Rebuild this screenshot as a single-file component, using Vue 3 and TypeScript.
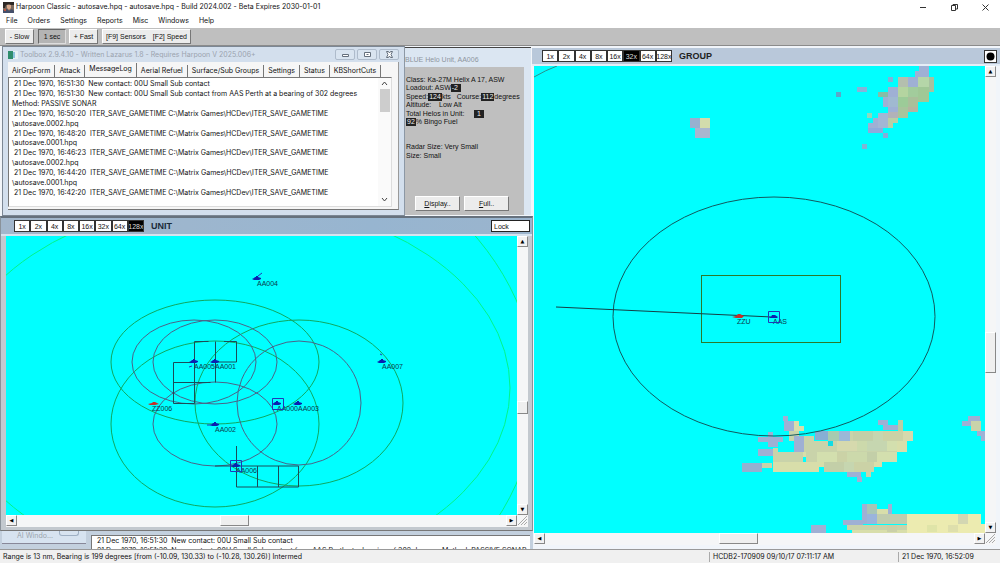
<script setup lang="ts">
import { ref } from 'vue'

type Rect = [number, number, number, number, string]

const menus = ['File', 'Orders', 'Settings', 'Reports', 'Misc', 'Windows', 'Help']
const tabs = ['AirGrpForm', 'Attack', 'MessageLog', 'Aerial Refuel', 'Surface/Sub Groups', 'Settings', 'Status', 'KBShortCuts']
const activeTab = ref('MessageLog')
const zooms = ['1x', '2x', '4x', '8x', '16x', '32x', '64x', '128x']
const unitZoom = ref('128x')
const groupZoom = ref('32x')
const lock = ref('Lock')

const save = 'ITER_SAVE_GAMETIME C:\\Matrix Games\\HCDev\\ITER_SAVE_GAMETIME'
const log = [
  ' 21 Dec 1970, 16:51:30  New contact: 00U Small Sub contact',
  ' 21 Dec 1970, 16:51:30  New contact: 00U Small Sub contact from AAS Perth at a bearing of 302 degrees',
  'Method: PASSIVE SONAR',
  ' 21 Dec 1970, 16:50:20  ' + save,
  '\\autosave.0002.hpq',
  ' 21 Dec 1970, 16:48:20  ' + save,
  '\\autosave.0001.hpq',
  ' 21 Dec 1970, 16:46:23  ' + save,
  '\\autosave.0002.hpq',
  ' 21 Dec 1970, 16:44:20  ' + save,
  '\\autosave.0001.hpq',
  ' 21 Dec 1970, 16:42:20  ' + save,
]

const greenRings = [[209, 126, 104, 62], [209, 188, 104, 83], [293, 167, 104, 83]]
const sonarRings = [[188, 126, 62, 42], [209, 126, 62, 42], [209, 188, 62, 42], [293, 167, 62, 62]]
const units = [
  { x: 251, y: 43, name: 'AA004' },
  { x: 188, y: 126, name: 'AA005' },
  { x: 209, y: 126, name: 'AA001' },
  { x: 376, y: 126, name: 'AA007' },
  { x: 271, y: 168, name: 'AA000' },
  { x: 292, y: 168, name: 'AA003' },
  { x: 209, y: 189, name: 'AA002' },
  { x: 230, y: 230, name: 'AA006' },
]

const v = '#9fb0d4'
const g = '#b7cfa6'
const s = '#c9d3aa'
const y = '#d8deaa'
const p = '#ecebb0'
const land: Rect[] = [
  [156, 52, 10, 10, '#97b0d0'], [166, 52, 10, 10, '#d2dcac'], [161, 62, 15, 10, '#a8b6cf'],
  [385, 0, 10, 11, v], [381, 5, 5, 6, v], [354, 11, 5, 5, '#7fb4d8'], [323, 21, 10, 5, '#86b4d8'], [302, 26, 5, 5, '#5ca6c8'],
  [364, 11, 10, 10, '#b4bfae'], [374, 11, 10, 10, v], [384, 11, 11, 10, '#b5d6a8'], [395, 11, 5, 15, '#a6c2a0'],
  [344, 26, 10, 5, '#86bda6'], [354, 21, 10, 10, v], [364, 21, 10, 10, '#b4d4a0'], [374, 21, 10, 10, '#a2cc9c'], [384, 21, 11, 15, '#a0c896'],
  [349, 31, 5, 10, v], [354, 31, 10, 10, '#a0b9d0'], [364, 31, 10, 10, '#9ccb98'], [374, 31, 10, 10, '#aabf9a'],
  [354, 41, 10, 5, v], [354, 46, 10, 6, '#b2b2b8'], [364, 41, 10, 11, '#a8c49c'], [374, 41, 10, 5, '#b4b4a0'],
  [333, 47, 5, 5, '#8fd8bc'], [344, 47, 10, 10, '#a3b6d4'], [354, 52, 10, 5, g], [354, 57, 5, 5, g],
  [339, 52, 5, 5, v], [334, 57, 10, 5, v], [334, 62, 15, 5, '#90aadb'], [344, 57, 10, 5, '#a3b6d4'], [349, 67, 5, 5, '#88acd8'], [328, 78, 5, 5, '#80b4d4'],
  [249, 350, 5, 5, v], [250, 355, 10, 10, v], [260, 355, 5, 10, y], [265, 360, 5, 5, y], [255, 365, 10, 10, s],
  [234, 366, 5, 5, v], [224, 371, 25, 5, v], [234, 376, 10, 5, v], [224, 383, 15, 7, v], [239, 382, 5, 8, s],
  [260, 370, 10, 16, v], [270, 370, 10, 16, s], [280, 376, 10, 10, y],
  [239, 386, 30, 10, s], [269, 386, 11, 5, y], [208, 397, 20, 9, '#95b0d0'], [228, 397, 10, 5, s], [239, 396, 46, 10, y],
  [281, 365, 13, 9, '#87afd4'], [294, 365, 11, 10, '#a6cbb0'], [305, 365, 11, 10, '#9ab8d8'], [316, 365, 63, 10, s],
  [280, 375, 93, 11, s], [272, 386, 91, 10, s], [285, 396, 63, 5, y], [290, 401, 50, 5, y],
  [363, 375, 10, 11, y], [313, 406, 14, 5, v], [323, 411, 5, 5, v], [332, 406, 5, 5, s],
  [344, 354, 10, 5, v], [349, 359, 15, 5, v], [364, 354, 5, 11, g],
  [434, 350, 12, 5, v], [428, 355, 9, 5, v], [437, 355, 10, 10, s], [443, 365, 8, 5, v], [447, 370, 4, 5, v],
  [328, 438, 5, 20, v], [333, 438, 10, 10, '#a8c5b6'], [343, 443, 15, 5, y], [354, 438, 4, 10, v],
  [333, 448, 10, 10, '#9ab4dc'], [343, 448, 30, 10, '#c0ccae'], [373, 448, 74, 10, p], [309, 454, 20, 5, v],
  [313, 459, 60, 5, s], [318, 464, 55, 6, y], [373, 458, 78, 12, p], [277, 459, 15, 11, v],
]
const shades = ['#c3cfa8', '#ccd9ab', '#d6d9ad', '#cbd2a6', '#d3dfae', '#c6d6b0']
// One strip per row of terrain: left, top, number of 10px cells
const strips = [[319, 365, 6], [303, 375, 6], [283, 386, 8], [290, 396, 5]]
for (const [i, [sx, sy, n]] of strips.entries()) {
  for (let c = 0; c < n; c++) land.push([sx + c * 10, sy, 10, 10, shades[(c * 5 + i * 2 + ((c * c) % 3)) % shades.length]])
}
land.push([294, 375, 5, 5, '#10dce4'], [424, 448, 10, 10, '#d3d6b2'], [353, 459, 10, 7, '#cad0a8'], [393, 459, 10, 7, '#dfe4a8'], [414, 459, 10, 7, '#dedfac'])
</script>

<template>
  <div class="app">
    <header class="titlebar">
      <svg class="logo" width="11" height="11" viewBox="0 0 11 11">
        <rect width="11" height="11" fill="#7d6a5c" />
        <path d="M0 0h11v3H8L6 2 3 3 2 6H0z" fill="#2d2825" />
        <path d="M4 3h4v3L6 8 4 6z" fill="#d9a98c" />
        <path d="M0 8l4-1 2 2 3-2 2 2v2H0z" fill="#45506b" />
        <path d="M1 7h2v2H1z" fill="#b9543e" />
      </svg>
      <span class="grow">Harpoon Classic - autosave.hpq - autosave.hpq - Build 2024.002 - Beta Expires 2030-01-01</span>
      <button class="sys" aria-label="Minimize"><svg width="9" height="9"><path d="M1 4.500h6" /></svg></button>
      <button class="sys" aria-label="Restore"><svg width="9" height="9"><path d="M1.500 2.500h4v5h-4zM3 2V1.500h4.500V6H6" /></svg></button>
      <button class="sys" aria-label="Close"><svg width="9" height="9"><path d="M1.500 1.500l6 6M7.500 1.500l-6 6" /></svg></button>
    </header>
    <nav class="menu">
      <button v-for="m in menus" :key="m">{{ m }}</button>
    </nav>
    <div class="toolbar">
      <button class="slow">- Slow</button>
      <button class="pressed">1 sec</button>
      <button class="fast">+ Fast</button>
      <div class="pair"><button>[F9] Sensors</button><button>[F2] Speed</button></div>
    </div>

    <main class="desk">
      <div class="left">
        <div class="upper">
          <section class="toolbox">
            <div class="tb-title">
              <svg width="10" height="8"><rect width="10" height="8" fill="#e8f1f4" /><rect width="5" height="8" fill="#2f8d6c" /><rect x="5" y="1" width="2" height="6" fill="#8cc3dc" /></svg>
              <span class="grow">Toolbox 2.9.4.10 - Written Lazarus 1.8 - Requires Harpoon V 2025.006+</span>
              <button aria-label="Minimize toolbox"><svg width="9" height="7"><path d="M1.500 3.500h6v2h-6z" /></svg></button>
              <button aria-label="Maximize toolbox"><svg width="9" height="7"><path d="M1.500 1.500h6v4h-6zM3.500 3.500h2" /></svg></button>
              <button aria-label="Close toolbox"><svg width="9" height="7"><path d="M1.500 .5h2l1 1.500 1-1.500h2L6 3.500l1.500 3h-2l-1-1.500-1 1.500h-2l1.500-3z" /></svg></button>
            </div>
            <div class="tb-body">
              <div class="tabs" role="tablist">
                <button v-for="t in tabs" :key="t" role="tab" :aria-selected="t === activeTab" :class="{ on: t === activeTab }" @click="activeTab = t">{{ t }}</button>
              </div>
              <div class="logbox">
                <ul class="log"><li v-for="(l, i) in log" :key="i">{{ l }}</li></ul>
                <div class="thin">
                  <svg width="7" height="5"><path d="M1 4l2.500-3L6 4" /></svg>
                  <i></i>
                  <svg width="7" height="5"><path d="M1 1l2.500 3L6 1" /></svg>
                </div>
              </div>
            </div>
          </section>

          <section class="helo">
            <h2>BLUE Helo Unit, AA006</h2>
            <div class="helo-body">
              <div class="facts">
                <p>Class: Ka-27M Helix A 17, ASW</p>
                <p>Loadout: ASW<b>-2&nbsp;</b></p>
                <p>Speed:<b>124</b>kts &nbsp; Course:<b>112</b>degrees</p>
                <p>Altitude: &nbsp; &nbsp;Low Alt</p>
                <p>Total Helos in Unit: &nbsp; &nbsp; <b>&nbsp;1&nbsp;</b></p>
                <p><b>92</b>% Bingo Fuel</p>
                <p></p>
                <p></p>
                <p>Radar Size: Very Small</p>
                <p>Size: Small</p>
              </div>
              <div class="acts">
                <button><u>D</u>isplay..</button>
                <button><u>F</u>ull..</button>
              </div>
            </div>
          </section>
        </div>

        <section class="unit">
          <div class="bar">
            <div class="zooms">
              <button v-for="z in zooms" :key="z" :class="{ on: z === unitZoom }" @click="unitZoom = z">{{ z }}</button>
            </div>
            <h2 class="grow">UNIT</h2>
            <input v-model="lock" aria-label="Lock" />
          </div>
          <div class="view">
            <svg class="map">
              <g fill="none" stroke="#00f58a">
                <ellipse cx="186" cy="156" rx="344" ry="275" />
                <ellipse cx="224" cy="152" rx="280" ry="188" />
              </g>
              <g fill="none" stroke="#0fa860">
                <ellipse v-for="(r, i) in greenRings" :key="i" :cx="r[0]" :cy="r[1]" :rx="r[2]" :ry="r[3]" />
              </g>
              <g fill="none" stroke="#4a6488">
                <ellipse v-for="(r, i) in sonarRings" :key="i" :cx="r[0]" :cy="r[1]" :rx="r[2]" :ry="r[3]" />
              </g>
              <path class="legs" d="M188.500 105.500v62M188.500 105.500h14M218 105.500h12.500M209.500 105.500v41M230.500 105.500v20.500H209M188.500 126.500h-21v41h21M167.500 146.500h37M230.500 210v41h62v-21H209M251.500 230v21M272.500 230v21" />
              <g v-for="u in units" :key="u.name">
                <path d="M-5 0l2-1 1-1h1v-1h2v1l3 1v1l-2 1h-5l-2-1z" class="own" :transform="`translate(${u.x} ${u.y})`" />
                <text :x="u.x" :y="u.y + 7">{{ u.name }}</text>
              </g>
              <path d="M252 40l4-3M183 131l3-1M374 118l2 1M201 189h4" class="trail" />
              <path d="M142 168l4-1 1-1h2l4 2-4 1h-5z" class="foe" />
              <text x="146" y="175">ZZ006</text>
              <path d="M266.500 162.500h11v11h-11zM224.500 224.500h11v11h-11z" class="pick" />
            </svg>
            <div class="vs v-unit"><button aria-label="Scroll up">▲</button><i></i><button aria-label="Scroll down">▼</button></div>
            <div class="hs h-unit"><button aria-label="Scroll left">◀</button><i></i><button aria-label="Scroll right">▶</button></div>
            <svg class="grip" width="10" height="10"><path d="M1 10l9-9M4 10l6-6M7 10l3-3" /></svg>
          </div>
        </section>

        <div class="behind">
          <div class="ai"><span>AI Windo...</span><em></em></div>
          <div class="backlog">
            <p>21 Dec 1970, 16:51:30&nbsp; New contact: 00U Small Sub contact</p>
            <p>21 Dec 1970, 16:51:30&nbsp; New contact: 00U Small Sub contact from AAS Perth at a bearing of 302 degrees Method: PASSIVE SONAR</p>
          </div>
        </div>
      </div>

      <section class="group">
        <div class="bar">
          <div class="zooms">
            <button v-for="z in zooms" :key="z" :class="{ on: z === groupZoom }" @click="groupZoom = z">{{ z }}</button>
          </div>
          <h2 class="grow">GROUP</h2>
          <button class="dot" aria-label="Center"><svg width="9" height="9"><circle cx="4.500" cy="4.500" r="4" /></svg></button>
        </div>
        <div class="view">
          <svg class="map">
            <g shape-rendering="crispEdges">
              <rect v-for="(r, i) in land" :key="i" :x="r[0]" :y="r[1]" :width="r[2]" :height="r[3]" :fill="r[4]" />
            </g>
            <path d="M0 11Q12 4 23 0" fill="none" stroke="#2a8f8c" />
            <ellipse cx="240" cy="250.500" rx="161" ry="119.500" fill="none" stroke="#12595e" />
            <rect x="167.500" y="209.500" width="139" height="67" fill="none" stroke="#2b7a2b" />
            <path d="M22 241l216 10" stroke="#153f45" />
            <path d="M198 251l4-1 2-2h2l4 2-2 2h-6z" class="foe" />
            <text x="203" y="258">ZZU</text>
            <path d="M235 251h2l1-2h3l3 2-1 1h-7z" class="own" />
            <text x="239" y="258">AAS</text>
            <path d="M234.500 245.500h11v11h-11z" class="pick" />
          </svg>
          <div class="vs v-group"><button aria-label="Scroll up">▲</button><i></i><button aria-label="Scroll down">▼</button></div>
          <div class="hs h-group"><button aria-label="Scroll left">◀</button><i></i><button aria-label="Scroll right">▶</button></div>
          <svg class="grip" width="10" height="10"><path d="M1 10l9-9M4 10l6-6M7 10l3-3" /></svg>
        </div>
      </section>
    </main>

    <footer class="status">
      <span>Range is 13 nm, Bearing is 199 degrees [from (-10.09, 130.33) to (-10.28, 130.26)] Intermed</span>
      <span>HCDB2-170909 09/10/17 07:11:17 AM</span>
      <span>21 Dec 1970, 16:52:09</span>
    </footer>
  </div>
</template>

<style>
body { margin: 0; }
</style>

<style scoped>
* { box-sizing: border-box; }
.app {
  height: 100vh; display: flex; flex-direction: column; overflow: hidden;
  background: #fff; color: #111; font: 7px/10px Inter, "Open Sans", sans-serif;
}
button, input { font: inherit; color: inherit; margin: 0; padding: 0; border: 0; background: none; border-radius: 0; }
h2, p, ul { margin: 0; padding: 0; list-style: none; }
h2 { font-size: inherit; }
.grow { flex: 1; }

.titlebar { height: 14px; flex: none; display: flex; align-items: center; padding-left: 3px; gap: 2px; white-space: nowrap; }
.sys { width: 29px; height: 14px; display: grid; place-items: center; }
.sys svg { fill: none; stroke: #333; }
.menu { height: 14px; flex: none; display: flex; align-items: center; padding-left: 6px; gap: 10px; }
.toolbar {
  height: 18px; flex: none; display: flex; align-items: center; padding-left: 5px; background: #bfbfbf;
  border-bottom: 1px solid #8b8b8b; font: 7px/10px "Liberation Sans", Arial, sans-serif;
}
.toolbar > * { height: 15px; background: #ececec; border: 1px solid; border-color: #fff #777 #777 #fff; white-space: nowrap; }
.slow { width: 29px; margin-right: 4px; }
.toolbar .pressed { width: 28px; margin-right: 3px; background: #b4b4b4; border-color: #666 #ddd #ddd #666; }
.fast { width: 29px; margin-right: 4px; }
.pair { display: flex; align-items: center; gap: 7px; padding: 0 3px; }

.desk { flex: 1; min-height: 0; display: grid; grid-template-columns: minmax(0, 533fr) minmax(0, 467fr); background: #f2f5f9; }
.left { display: flex; flex-direction: column; min-height: 0; min-width: 0; }
.upper { flex: none; height: 170px; display: grid; grid-template-columns: minmax(0, 405fr) minmax(0, 128fr); }

.toolbox { display: flex; flex-direction: column; margin-left: 2px; padding: 0 5px 5px 5px; background: #d3dfed; border: 1px solid #7c8794; border-right-color: #8c98a5; }
.tb-title { height: 15px; flex: none; display: flex; align-items: center; gap: 2px; color: #9ba3ad; white-space: nowrap; }
.tb-title button { width: 20px; height: 11px; display: grid; place-items: center; border: 1px solid #aebbcb; border-radius: 2px; background: #d9e4f0; }
.tb-title button svg { fill: #fff; stroke: #646f7c; }
.tb-body { flex: 1; min-height: 0; display: flex; flex-direction: column; background: #f6f6f6; border-bottom: 1px solid #777; border-right: 1px solid #999; }
.tabs { height: 15px; flex: none; display: flex; align-items: end; }
.tabs button { height: 12px; padding: 0 4px 0 4px; border-right: 1px solid #777; white-space: nowrap; }
.tabs .on { height: 14px; padding-bottom: 2px; }
.logbox { flex: 1; min-height: 0; display: flex; margin: 0 6px 2px 0; background: #fff; border: 1px solid #888; border-color: #777 #ddd #ddd #777; }
.log { flex: 1; min-width: 0; display: grid; grid-auto-rows: 1fr; padding: 1px 0 9px 3px; }
.log li { white-space: pre; min-height: 0; display: flex; align-items: center; line-height: 9px; }
.thin { width: 13px; display: flex; flex-direction: column; align-items: center; padding: 3px 0 4px; background: #fafafa; }
.thin svg { fill: none; stroke: #444; }
.thin i { width: 10px; height: 23px; margin: 3px 0 auto; background: #cdcdcd; }

.helo { margin: 1px 2px 1px 0; padding-right: 7px; display: flex; flex-direction: column; background: #dbe6f2; font: 7px/10px "Liberation Sans", Arial, sans-serif; border-top: 1px solid #444; min-width: 0; }
.helo h2 { height: 19px; line-height: 23px; font-weight: 400; color: #8e959e; white-space: nowrap; }
.helo-body { flex: 1; display: flex; flex-direction: column; justify-content: space-between; background: #bfbfbf; padding: 9px 0 4px 1px; }
.facts { display: grid; grid-auto-rows: 1fr; height: 84px; }
.facts p { white-space: nowrap; line-height: 8px; color: #111; }
.facts b { display: inline-block; height: 8px; padding: 0 1px; font-weight: 400; color: #eee; background: #222; }
.acts { display: flex; gap: 4px; padding-left: 9px; }
.acts button { width: 45px; height: 15px; background: #ececec; border: 1px solid; border-color: #fff #777 #777 #fff; }

.unit { flex: 1; min-height: 0; display: flex; flex-direction: column; padding: 0 4px 3px 5px; background: #c3c9cf; border: 1px solid #8a929a; border-top: 2px solid #66717d; border-bottom: 1px solid #777; }
.unit .bar { margin: 0 -4px 0 -5px; height: 18px; background: linear-gradient(90deg, #a3b7cc, #97b5d0 70%, #9ab4cd); padding: 0 2px 0 13px; border-bottom: 2px solid #d5e2ee; }
.bar { flex: none; display: flex; align-items: center; font: 7px/10px "Liberation Sans", Arial, sans-serif; }
.bar h2 { font-size: 9px; color: #1b2a3a; padding-left: 7px; }
.bar input { width: 39px; height: 12px; background: #fff; border: 1px solid #222; padding-left: 2px; }
.zooms { display: grid; grid-template-columns: repeat(8, 1fr); width: 130px; height: 12px; }
.zooms button { background: #fff; border: 1px solid #333; overflow: hidden; line-height: 9px; display: flex; justify-content: center; align-items: center; }
.zooms .on { background: #000; color: #ddd; }
.view { flex: 1; min-height: 0; display: grid; grid-template-columns: minmax(0, 1fr) 11px; grid-template-rows: minmax(0, 1fr) 12px; background: #f5f6f7; }
.map { width: 100%; height: 100%; background: #0ff; overflow: hidden; display: block; font: 7px "Liberation Sans", Arial, sans-serif; }
.map text { fill: #0b3a4c; }
.legs { fill: none; stroke: #1c4c58; }
.own { fill: #0b1fb0; }
.foe { fill: #c4302a; }
.trail, .pick { fill: none; stroke: #2038b8; }

.vs, .hs { display: flex; background: #f5f6f7; }
.vs { flex-direction: column; }
.vs button, .hs button { flex: none; width: 11px; height: 11px; font: 5px/9px "DejaVu Sans", sans-serif; background: #f2f2f2; border: 1px solid; border-color: #fff #888 #888 #fff; color: #000; }
.vs i, .hs i { flex: none; background: #efefef; border: 1px solid; border-color: #fff #888 #888 #fff; }
.vs button:last-child, .hs button:last-child { margin-top: auto; }
.hs button:last-child { margin: 0 0 0 auto; }
.v-unit i { height: 13px; margin-top: 154px; }
.h-unit i { width: 29px; height: 11px; margin-left: 203px; }
.v-group i { height: 41px; margin-top: 255px; }
.h-group i { width: 39px; height: 11px; margin-left: 174px; }
.grip { fill: none; stroke: #aaa; }

.behind { flex: none; height: 18px; display: flex; background: #c3d0de; overflow: hidden; }
.ai { width: 84px; margin-left: 2px; height: 13px; flex: none; padding-left: 15px; line-height: 9px; color: #9ba3ad; background: #d7e3f0; border-bottom: 1px solid #889; display: flex; gap: 6px; }
.ai em { width: 20px; height: 5px; border: 1px solid #9fb0c4; border-top: 0; border-radius: 0 0 3px 3px; }
.backlog { flex: 1; min-width: 0; margin: 4px 3px 0 5px; padding-left: 5px; background: #fff; border: 1px solid #777; border-width: 1px 0 0 1px; white-space: nowrap; overflow: hidden; }

.group { display: flex; flex-direction: column; min-height: 0; min-width: 0; padding: 2px 4px 4px 1px; background: #f1f5fa; }
.group .bar { height: 18px; margin: 0 -4px 0 -2px; padding: 0 3px 0 10px; background: #b9c8da; border-bottom: 2px solid #e4edf6; }
.group .bar h2 { color: #222; }
.dot { width: 13px; height: 13px; display: grid; place-items: center; background: #fff; border: 1px solid #333; }

.status { height: 14px; flex: none; display: grid; grid-template-columns: 709fr 189fr 102fr; align-items: center; background: #f0f0f0; border-top: 1px solid #999; white-space: nowrap; }
.status span { padding-left: 3px; border-left: 1px solid #aaa; overflow: hidden; }
.status span:first-child { border-left: 0; }
</style>
